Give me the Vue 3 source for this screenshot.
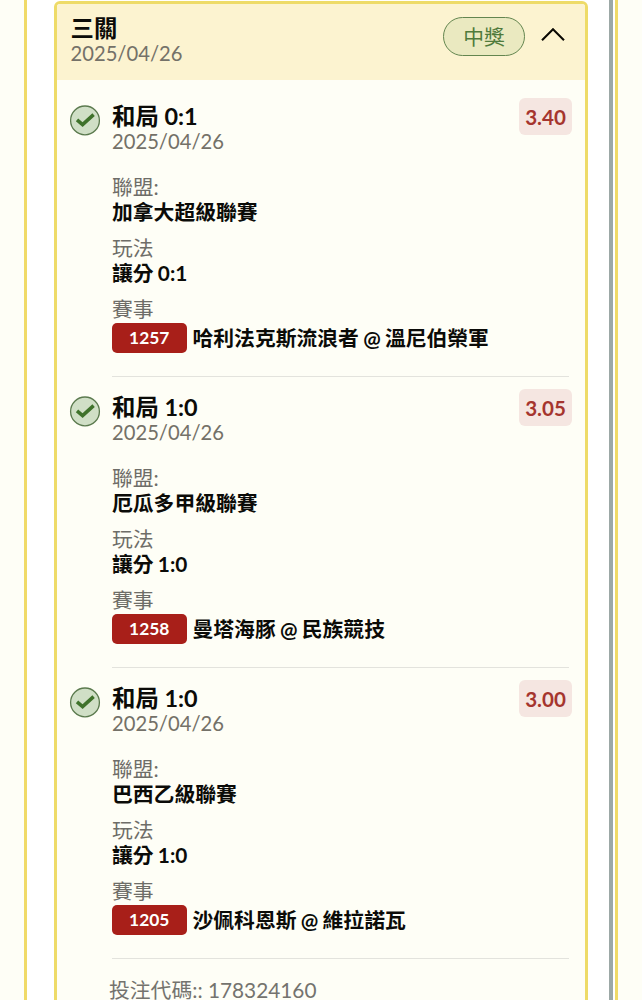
<script setup>
import { ref } from 'vue'

const expanded = ref(true)

const ticket = {
  title: '三關',
  date: '2025/04/26',
  status: '中獎',
  code: '178324160'
}

const bets = [
  {
    id: '1257',
    pick: '和局 0:1',
    date: '2025/04/26',
    odds: '3.40',
    league: '加拿大超級聯賽',
    market: '讓分 0:1',
    match: '哈利法克斯流浪者 @ 溫尼伯榮軍'
  },
  {
    id: '1258',
    pick: '和局 1:0',
    date: '2025/04/26',
    odds: '3.05',
    league: '厄瓜多甲級聯賽',
    market: '讓分 1:0',
    match: '曼塔海豚 @ 民族競技'
  },
  {
    id: '1205',
    pick: '和局 1:0',
    date: '2025/04/26',
    odds: '3.00',
    league: '巴西乙級聯賽',
    market: '讓分 1:0',
    match: '沙佩科恩斯 @ 維拉諾瓦'
  }
]
</script>

<template>
  <div class="page">
    <div class="panel">
      <div class="ticket">
        <div class="ticket-header" @click="expanded = !expanded">
          <div class="ticket-heading">
            <div class="ticket-title">{{ ticket.title }}</div>
            <div class="date">{{ ticket.date }}</div>
          </div>
          <div class="status">{{ ticket.status }}</div>
          <svg class="chevron" :class="{ closed: !expanded }" viewBox="0 0 26 16">
            <path d="M2 14.3 L13 3.3 L24 14.3" fill="none" stroke="#0c0a04" stroke-width="2.1" />
          </svg>
        </div>

        <div v-if="expanded" class="ticket-body">
          <div v-for="bet in bets" :key="bet.id" class="bet">
            <svg class="check" viewBox="0 0 32 32">
              <circle cx="16" cy="16.4" r="14.4" fill="#d0dfc6" stroke="#5b7a4e" stroke-width="1.3" />
              <path d="M8 15.8 L13.6 20.6 L24.6 10.6" fill="none" stroke="#3f722b" stroke-width="3.6" />
            </svg>
            <div class="bet-content">
              <div class="bet-top">
                <div>
                  <div class="pick">{{ bet.pick }}</div>
                  <div class="date">{{ bet.date }}</div>
                </div>
                <div class="odds">{{ bet.odds }}</div>
              </div>
              <div class="field">
                <div class="label">聯盟:</div>
                <div class="value">{{ bet.league }}</div>
              </div>
              <div class="field">
                <div class="label">玩法</div>
                <div class="value">{{ bet.market }}</div>
              </div>
              <div class="field">
                <div class="label">賽事</div>
                <div class="match">
                  <span class="match-id">{{ bet.id }}</span>
                  <span class="value">{{ bet.match }}</span>
                </div>
              </div>
            </div>
          </div>
          <div class="code">投注代碼:: {{ ticket.code }}</div>
        </div>
      </div>
    </div>
  </div>
</template>

<style>
body {
  margin: 0;
  overflow: hidden;
}
</style>

<style scoped>
.page {
  box-sizing: border-box;
  height: 1000px;
  padding: 0 24px;
  overflow: hidden;
  background: #fefef6;
  color: #0b0b08;
  font-family: Lato, "Noto Sans CJK TC", sans-serif;
  font-size: 20.8px;
}

.panel {
  box-sizing: border-box;
  width: 594px;
  height: 1000px;
  padding: 1px 22px 0 27px;
  background: linear-gradient(to right, #fff 582px, #9ca8a6 582px, #9ca8a6 586px, #fff 586px);
  border-left: 3px solid #f0da68;
  border-right: 3px solid #f0da68;
}

.ticket {
  box-sizing: border-box;
  width: 534px;
  height: 1040px;
  border: 3px solid #eedb68;
  border-radius: 6px;
  background: #fefef6;
  overflow: hidden;
}

.ticket-header {
  display: flex;
  box-sizing: border-box;
  height: 76px;
  padding: 11px 19px 0 13.5px;
  background: #fcf3d0;
  cursor: pointer;
}

.ticket-heading {
  flex: 1;
}

.ticket-title,
.pick {
  height: 26px;
  font-size: 23.4px;
  font-weight: 700;
  line-height: 26px;
}

.pick {
  line-height: 25px;
}

.date {
  height: 24px;
  color: #747168;
  font-size: 20.2px;
  line-height: 23px;
}

.ticket-heading .date {
  line-height: 25px;
}

.status {
  box-sizing: border-box;
  width: 82px;
  height: 39px;
  margin: 2px 15px 0 0;
  border: 1.5px solid #63854f;
  border-radius: 20px;
  background: #eae9c0;
  color: #4f7a3b;
  line-height: 38px;
  text-align: center;
}

.chevron {
  width: 26px;
  height: 16px;
  margin-top: 11px;
}

.chevron.closed {
  transform: rotate(180deg);
}

.ticket-body {
  padding: 6px 16px 0 13px;
}

.bet {
  display: flex;
  box-sizing: border-box;
  height: 291px;
  padding-top: 18px;
}

.check {
  flex: none;
  width: 32px;
  height: 32px;
  margin: 0 11px 0 -1px;
}

.bet-content {
  flex: 1;
  border-bottom: 1px solid #e3e3dd;
}

.bet-top {
  display: flex;
  justify-content: space-between;
  height: 69px;
}

.odds {
  width: 53px;
  height: 37px;
  margin: -6px -3px 0 0;
  border-radius: 6px;
  background: #f5e6e1;
  color: #a5352e;
  font-size: 20.6px;
  font-weight: 700;
  line-height: 38px;
  text-align: center;
}

.field {
  height: 51px;
  margin-bottom: 10px;
}

.label {
  height: 26px;
  color: #6e6d68;
  line-height: 27px;
}

.value {
  font-weight: 700;
  line-height: 26px;
  white-space: nowrap;
  word-spacing: -0.8px;
}

.match {
  display: flex;
  align-items: center;
  gap: 6px;
  height: 33px;
}

.match-id {
  width: 74.5px;
  height: 30px;
  border-radius: 5px;
  background: #a81f19;
  color: #fff;
  font-size: 17.4px;
  font-weight: 700;
  line-height: 30px;
  text-align: center;
}

.code {
  padding: 18px 0 0 39px;
  color: #74736e;
  line-height: 26px;
}
</style>
